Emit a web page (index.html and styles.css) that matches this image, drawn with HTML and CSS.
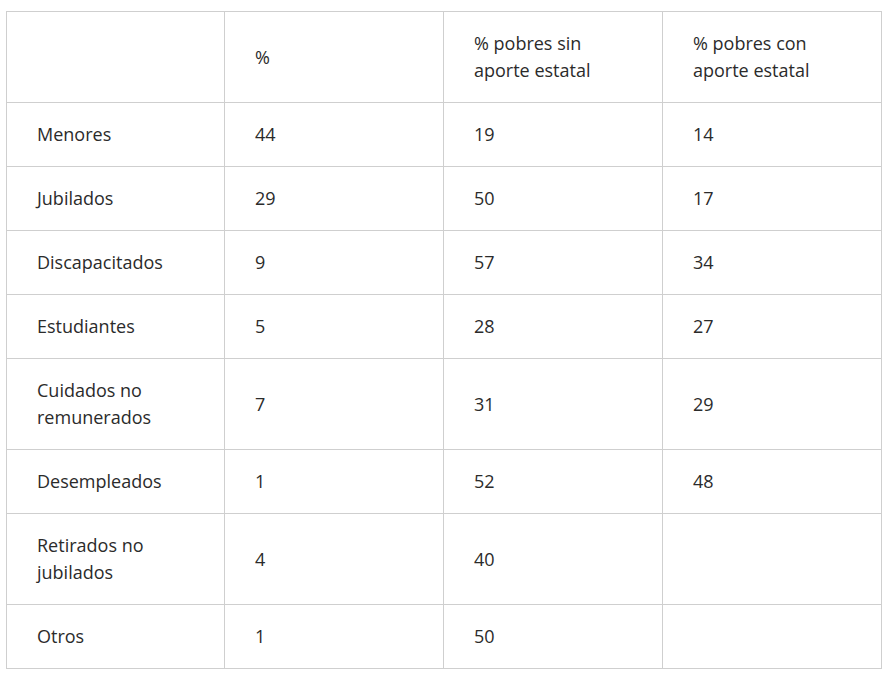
FILE: index.html
```html
<!DOCTYPE html>
<html lang="es">
<head>
<meta charset="utf-8">
<link rel="stylesheet" href="styles.css">
</head>
<body>
<table class="data">
<colgroup><col class="c1"><col class="c2"><col class="c3"><col class="c4"></colgroup>
<tbody>
<tr class="tall"><td></td><td>%</td><td>% pobres sin<br>aporte estatal</td><td>% pobres con<br>aporte estatal</td></tr>
<tr><td>Menores</td><td>44</td><td>19</td><td>14</td></tr>
<tr><td>Jubilados</td><td>29</td><td>50</td><td>17</td></tr>
<tr><td>Discapacitados</td><td>9</td><td>57</td><td>34</td></tr>
<tr><td>Estudiantes</td><td>5</td><td>28</td><td>27</td></tr>
<tr><td>Cuidados no<br>remunerados</td><td>7</td><td>31</td><td>29</td></tr>
<tr><td>Desempleados</td><td>1</td><td>52</td><td>48</td></tr>
<tr><td>Retirados no<br>jubilados</td><td>4</td><td>40</td><td></td></tr>
<tr><td>Otros</td><td>1</td><td>50</td><td></td></tr>
</tbody>
</table>
</body>
</html>
```
FILE: styles.css
```css
html, body {
  margin: 0;
  padding: 0;
  background: #fff;
}
body {
  padding: 11px 0 0 6px;
  font-family: "Open Sans", "Noto Sans", sans-serif;
  font-size: 18px;
  line-height: 27px;
  color: #2b2b2b;
}
.data {
  border-collapse: collapse;
  table-layout: fixed;
  width: 876px;
}
.c1 { width: 218px; }
.c2 { width: 219px; }
.c3 { width: 219px; }
.c4 { width: 219px; }
.data td {
  border: 1px solid #cfcfcf;
  padding: 18px 30px;
  vertical-align: middle;
  height: 27px;
}
```
